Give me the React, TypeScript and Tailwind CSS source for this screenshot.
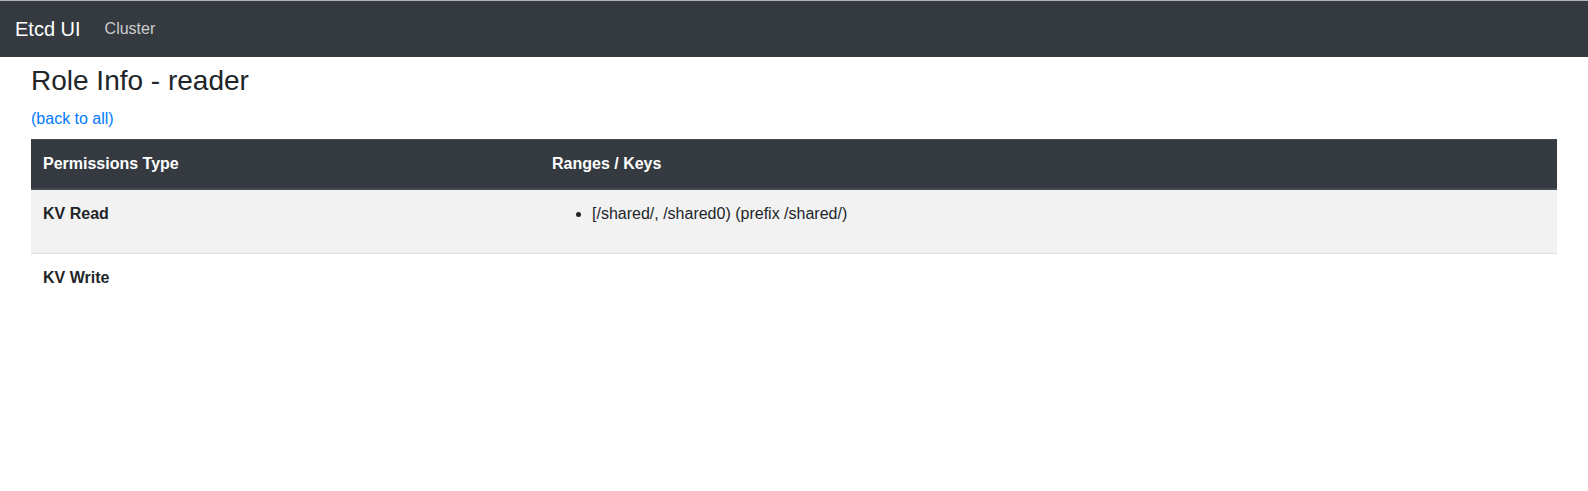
const PERMS = [
  { type: 'KV Read', keys: ['[/shared/, /shared0) (prefix /shared/)'] },
  { type: 'KV Write', keys: [] as string[] },
]

export default function App() {
  return (
    <div className="min-h-[491px] bg-white text-[#212529] font-['Liberation_Sans',Arial,sans-serif] text-base leading-6">
      <nav className="h-[57px] border-t border-[#b4b4b4] bg-[#343a40] flex items-center pl-[15px] pr-4">
        <a className="text-white text-xl leading-[30px] py-[5px] mr-4">Etcd UI</a>
        <a className="text-[rgba(255,255,255,0.75)] px-2 py-2">Cluster</a>
      </nav>

      <div className="px-[31px]">
        <h3 className="mt-[7px] mb-[9px] text-[28px] leading-[1.2] font-normal">Role Info - reader</h3>
        <p className="mb-[8px]">
          <a className="text-[#007bff]">(back to all)</a>
        </p>

        <table className="w-full border-collapse">
          <thead>
            <tr className="bg-[#343a40] text-white">
              <th className="w-[509px] text-left font-bold px-3 py-3 border-t border-b-2 border-[#454d55]">Permissions Type</th>
              <th className="text-left font-bold px-3 py-3 border-t border-b-2 border-[#454d55]">Ranges / Keys</th>
            </tr>
          </thead>
          <tbody>
            {PERMS.map((p, i) => (
              <tr key={p.type} className={i % 2 === 0 ? 'bg-[#f2f2f2]' : ''}>
                <th className="text-left align-top font-bold p-3 border-t border-[#dee2e6]">{p.type}</th>
                <td className="align-top p-3 border-t border-[#dee2e6]">
                  {p.keys.length > 0 && (
                    <ul className="list-disc pl-10 mb-[15px]">
                      {p.keys.map((k) => (
                        <li key={k}>{k}</li>
                      ))}
                    </ul>
                  )}
                </td>
              </tr>
            ))}
          </tbody>
        </table>
      </div>
    </div>
  )
}
